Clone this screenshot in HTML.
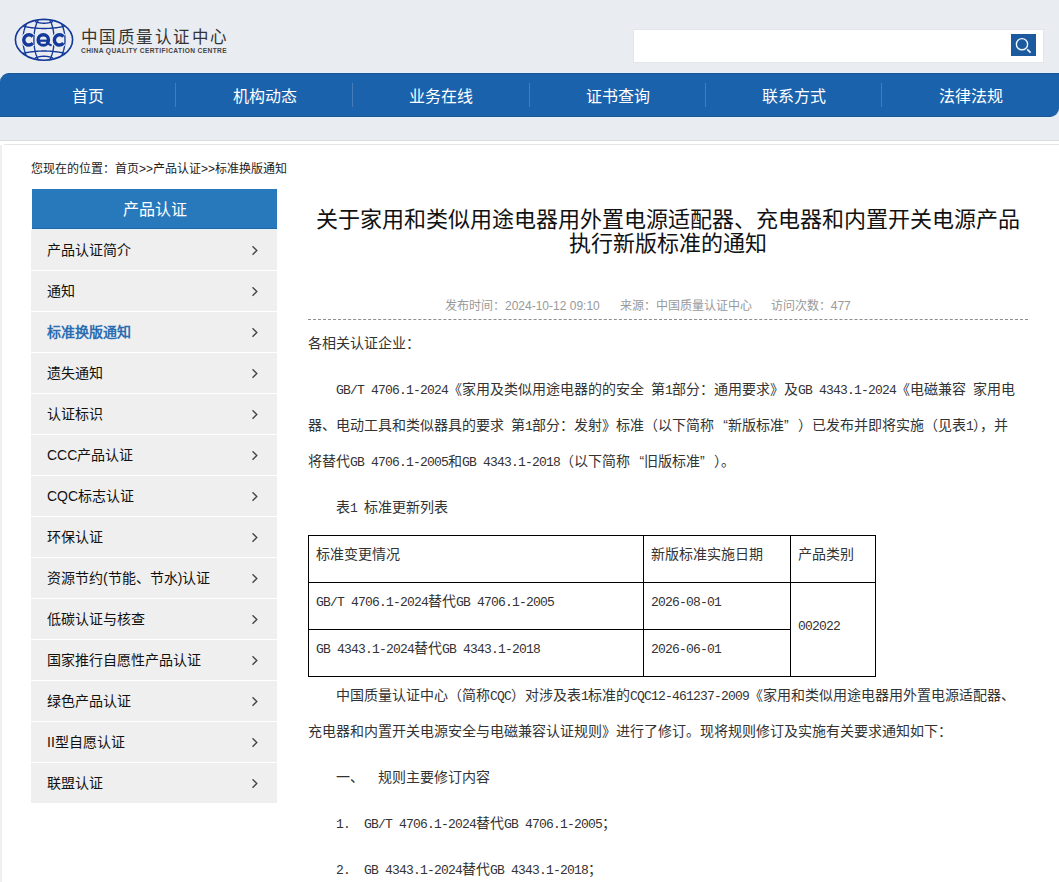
<!DOCTYPE html><html lang="zh-CN"><head><meta charset="utf-8"><title>CQC</title><style>
*{margin:0;padding:0;box-sizing:border-box}
html,body{width:1059px;height:882px;overflow:hidden;background:#fff}
body{position:relative;font-family:"Liberation Sans",sans-serif;color:#000}
.abs{position:absolute;white-space:nowrap}
#hdr{position:absolute;left:0;top:0;width:1059px;height:141px;background:#e9ecf0}
#nav{position:absolute;left:0;top:73px;width:1059px;height:44px;background:#1b62ad;border-top:1px solid #21538e;border-bottom:1px solid #21538e;border-radius:9px 0 9px 0;box-shadow:0 1px 0 #e0f4ff,0 -1px 0 #e0f4ff}
#nav .it{position:absolute;top:1.5px;height:42px;line-height:42px;width:176.5px;text-align:center;color:#fff;font-size:16px}
#nav .sep{position:absolute;top:9px;width:1px;height:24px;background:#477cbb}
#search{position:absolute;left:634px;top:30px;width:409px;height:32px;background:#fff;box-shadow:0 0 0 1px #e3e5e8}
#sbtn{position:absolute;left:1011px;top:34px;width:25px;height:22px;background:#1c5a9f}
#side{position:absolute;left:31px;top:189px;width:246px}
#side .hd{margin-left:1px;height:41px;padding-top:1px;background:#2779bc;border-bottom:1px solid #e2f6fd;box-shadow:inset 0 -1px 0 #2466a3;color:#fff;font-size:16px;text-align:center;line-height:39px}
#side .li{position:relative;height:41px;background:#efefef;border-bottom:1px solid #fff;font-size:14px;line-height:40px;padding-left:16px;padding-top:0;color:#111}
#side .li.on{color:#2b6db3;font-weight:bold}
#side .ar{position:absolute;left:221px;top:16px;width:7px;height:10px}
.txt{font-size:14px;color:#333}
.h{font-family:"Liberation Mono",monospace;font-size:13px;letter-spacing:-0.8px;white-space:pre}
.ql,.qr{display:inline-block;width:14px}
.ql{text-align:right}.qr{text-align:left}
</style></head><body>
<div id="hdr"></div>
<div class="abs" style="left:0;top:140px;width:1059px;height:1px;background:#d9dcdf"></div>
<div class="abs" style="left:4px;top:144px;width:1055px;height:1px;background:#e6e6e6"></div>
<div class="abs" style="left:0;top:145px;width:1.5px;height:737px;background:#efefef"></div>
<svg class="abs" style="left:10px;top:14px" width="70" height="52" viewBox="0 0 70 52">
<g fill="none" stroke="#14399a" stroke-width="1.35">
<ellipse cx="34" cy="25.8" rx="28.6" ry="20.4" stroke-width="1.6"/>
<path d="M16.39 41.59 L16.09 40.95 L15.81 40.30 L15.54 39.64 L15.29 38.97 L15.05 38.28 L14.82 37.60 L14.60 36.90 L14.39 36.19 L14.20 35.48 L14.03 34.76 L13.86 34.04 L13.72 33.31 L13.58 32.57 L13.46 31.83 L13.35 31.08 L13.26 30.34 L13.18 29.59 L13.12 28.83 L13.06 28.08 L13.03 27.32 L13.01 26.56 L13.00 25.80 L13.01 25.04 L13.03 24.28 L13.06 23.52 L13.12 22.77 L13.18 22.01 L13.26 21.26 L13.35 20.52 L13.46 19.77 L13.58 19.03 L13.72 18.29 L13.86 17.56 L14.03 16.84 L14.20 16.12 L14.39 15.41 L14.60 14.70 L14.82 14.00 L15.05 13.32 L15.29 12.63 L15.54 11.96 L15.81 11.30 L16.09 10.65 L16.39 10.01 M51.61 10.01 L51.91 10.65 L52.19 11.30 L52.46 11.96 L52.71 12.63 L52.95 13.32 L53.18 14.00 L53.40 14.70 L53.61 15.41 L53.80 16.12 L53.97 16.84 L54.14 17.56 L54.28 18.29 L54.42 19.03 L54.54 19.77 L54.65 20.52 L54.74 21.26 L54.82 22.01 L54.88 22.77 L54.94 23.52 L54.97 24.28 L54.99 25.04 L55.00 25.80 L54.99 26.56 L54.97 27.32 L54.94 28.08 L54.88 28.83 L54.82 29.59 L54.74 30.34 L54.65 31.08 L54.54 31.83 L54.42 32.57 L54.28 33.31 L54.14 34.04 L53.97 34.76 L53.80 35.48 L53.61 36.19 L53.40 36.90 L53.18 37.60 L52.95 38.28 L52.71 38.97 L52.46 39.64 L52.19 40.30 L51.91 40.95 L51.61 41.59 M28.28 45.58 L28.06 45.22 L27.85 44.84 L27.64 44.45 L27.44 44.05 L27.24 43.64 L27.05 43.21 L26.86 42.77 L26.67 42.32 L26.49 41.86 L26.32 41.39 L26.15 40.90 L25.99 40.41 L25.83 39.91 L25.68 39.39 L25.53 38.87 L25.39 38.34 L25.25 37.80 L25.12 37.25 L25.00 36.70 L24.88 36.13 L24.77 35.56 L24.67 34.98 L24.57 34.40 L24.48 33.81 L24.39 33.22 L24.32 32.62 L24.24 32.01 L24.18 31.40 L24.12 30.79 L24.07 30.17 L24.02 29.55 L23.99 28.93 L23.96 28.31 L23.93 27.68 L23.91 27.06 L23.90 26.43 L23.90 25.80 L23.90 25.17 L23.91 24.54 L23.93 23.92 L23.96 23.29 L23.99 22.67 L24.02 22.05 L24.07 21.43 L24.12 20.81 L24.18 20.20 L24.24 19.59 L24.32 18.98 L24.39 18.38 L24.48 17.79 L24.57 17.20 L24.67 16.62 L24.77 16.04 L24.88 15.47 L25.00 14.90 L25.12 14.35 L25.25 13.80 L25.39 13.26 L25.53 12.73 L25.68 12.21 L25.83 11.69 L25.99 11.19 L26.15 10.70 L26.32 10.21 L26.49 9.74 L26.67 9.28 L26.86 8.83 L27.05 8.39 L27.24 7.96 L27.44 7.55 L27.64 7.15 L27.85 6.76 L28.06 6.38 L28.28 6.02 M39.72 6.02 L39.94 6.38 L40.15 6.76 L40.36 7.15 L40.56 7.55 L40.76 7.96 L40.95 8.39 L41.14 8.83 L41.33 9.28 L41.51 9.74 L41.68 10.21 L41.85 10.70 L42.01 11.19 L42.17 11.69 L42.32 12.21 L42.47 12.73 L42.61 13.26 L42.75 13.80 L42.88 14.35 L43.00 14.90 L43.12 15.47 L43.23 16.04 L43.33 16.62 L43.43 17.20 L43.52 17.79 L43.61 18.38 L43.68 18.98 L43.76 19.59 L43.82 20.20 L43.88 20.81 L43.93 21.43 L43.98 22.05 L44.01 22.67 L44.04 23.29 L44.07 23.92 L44.09 24.54 L44.10 25.17 L44.10 25.80 L44.10 26.43 L44.09 27.06 L44.07 27.68 L44.04 28.31 L44.01 28.93 L43.98 29.55 L43.93 30.17 L43.88 30.79 L43.82 31.40 L43.76 32.01 L43.68 32.62 L43.61 33.22 L43.52 33.81 L43.43 34.40 L43.33 34.98 L43.23 35.56 L43.12 36.13 L43.00 36.70 L42.88 37.25 L42.75 37.80 L42.61 38.34 L42.47 38.87 L42.32 39.39 L42.17 39.91 L42.01 40.41 L41.85 40.90 L41.68 41.39 L41.51 41.86 L41.33 42.32 L41.14 42.77 L40.95 43.21 L40.76 43.64 L40.56 44.05 L40.36 44.45 L40.15 44.84 L39.94 45.22 L39.72 45.58 M13.20 12.26 L13.85 12.40 L14.50 12.53 L15.15 12.66 L15.80 12.78 L16.45 12.91 L17.10 13.02 L17.75 13.13 L18.40 13.24 L19.05 13.34 L19.70 13.44 L20.35 13.54 L21.00 13.62 L21.65 13.71 L22.30 13.79 L22.95 13.87 L23.60 13.94 L24.25 14.01 L24.90 14.07 L25.55 14.13 L26.20 14.19 L26.85 14.24 L27.50 14.28 L28.15 14.32 L28.80 14.36 L29.45 14.39 L30.10 14.42 L30.75 14.45 L31.40 14.46 L32.05 14.48 L32.70 14.49 L33.35 14.50 L34.00 14.50 L34.65 14.50 L35.30 14.49 L35.95 14.48 L36.60 14.46 L37.25 14.45 L37.90 14.42 L38.55 14.39 L39.20 14.36 L39.85 14.32 L40.50 14.28 L41.15 14.24 L41.80 14.19 L42.45 14.13 L43.10 14.07 L43.75 14.01 L44.40 13.94 L45.05 13.87 L45.70 13.79 L46.35 13.71 L47.00 13.62 L47.65 13.54 L48.30 13.44 L48.95 13.34 L49.60 13.24 L50.25 13.13 L50.90 13.02 L51.55 12.91 L52.20 12.79 L52.85 12.66 L53.50 12.53 L54.15 12.40 L54.80 12.26 M13.20 39.24 L13.85 39.10 L14.50 38.97 L15.15 38.84 L15.80 38.71 L16.45 38.59 L17.10 38.48 L17.75 38.37 L18.40 38.26 L19.05 38.16 L19.70 38.06 L20.35 37.96 L21.00 37.88 L21.65 37.79 L22.30 37.71 L22.95 37.63 L23.60 37.56 L24.25 37.49 L24.90 37.43 L25.55 37.37 L26.20 37.31 L26.85 37.26 L27.50 37.22 L28.15 37.18 L28.80 37.14 L29.45 37.11 L30.10 37.08 L30.75 37.05 L31.40 37.04 L32.05 37.02 L32.70 37.01 L33.35 37.00 L34.00 37.00 L34.65 37.00 L35.30 37.01 L35.95 37.02 L36.60 37.03 L37.25 37.05 L37.90 37.08 L38.55 37.11 L39.20 37.14 L39.85 37.18 L40.50 37.22 L41.15 37.26 L41.80 37.31 L42.45 37.37 L43.10 37.43 L43.75 37.49 L44.40 37.56 L45.05 37.63 L45.70 37.71 L46.35 37.79 L47.00 37.88 L47.65 37.96 L48.30 38.06 L48.95 38.16 L49.60 38.26 L50.25 38.37 L50.90 38.48 L51.55 38.59 L52.20 38.71 L52.85 38.84 L53.50 38.97 L54.15 39.10 L54.80 39.24 M25.00 7.50 L25.23 7.59 L25.45 7.67 L25.68 7.75 L25.90 7.83 L26.12 7.91 L26.35 7.99 L26.57 8.06 L26.80 8.13 L27.02 8.20 L27.25 8.27 L27.48 8.33 L27.70 8.39 L27.93 8.45 L28.15 8.51 L28.38 8.57 L28.60 8.62 L28.82 8.67 L29.05 8.72 L29.27 8.77 L29.50 8.81 L29.73 8.86 L29.95 8.90 L30.18 8.93 L30.40 8.97 L30.62 9.00 L30.85 9.04 L31.07 9.07 L31.30 9.09 L31.52 9.12 L31.75 9.14 L31.98 9.16 L32.20 9.18 L32.43 9.20 L32.65 9.21 L32.88 9.22 L33.10 9.23 L33.33 9.24 L33.55 9.25 L33.77 9.25 L34.00 9.25 L34.22 9.25 L34.45 9.25 L34.67 9.24 L34.90 9.23 L35.12 9.22 L35.35 9.21 L35.58 9.20 L35.80 9.18 L36.03 9.16 L36.25 9.14 L36.47 9.12 L36.70 9.09 L36.92 9.07 L37.15 9.04 L37.38 9.00 L37.60 8.97 L37.83 8.93 L38.05 8.90 L38.27 8.86 L38.50 8.81 L38.72 8.77 L38.95 8.72 L39.17 8.67 L39.40 8.62 L39.62 8.57 L39.85 8.51 L40.08 8.45 L40.30 8.39 L40.53 8.33 L40.75 8.27 L40.97 8.20 L41.20 8.13 L41.42 8.06 L41.65 7.99 L41.88 7.91 L42.10 7.83 L42.33 7.75 L42.55 7.67 L42.77 7.59 L43.00 7.50 M25.00 44.00 L25.23 43.91 L25.45 43.83 L25.68 43.75 L25.90 43.67 L26.12 43.59 L26.35 43.51 L26.57 43.44 L26.80 43.37 L27.02 43.30 L27.25 43.23 L27.48 43.17 L27.70 43.11 L27.93 43.05 L28.15 42.99 L28.38 42.93 L28.60 42.88 L28.82 42.83 L29.05 42.78 L29.27 42.73 L29.50 42.69 L29.73 42.64 L29.95 42.60 L30.18 42.57 L30.40 42.53 L30.62 42.50 L30.85 42.46 L31.07 42.43 L31.30 42.41 L31.52 42.38 L31.75 42.36 L31.98 42.34 L32.20 42.32 L32.43 42.30 L32.65 42.29 L32.88 42.28 L33.10 42.27 L33.33 42.26 L33.55 42.25 L33.77 42.25 L34.00 42.25 L34.22 42.25 L34.45 42.25 L34.67 42.26 L34.90 42.27 L35.12 42.28 L35.35 42.29 L35.58 42.30 L35.80 42.32 L36.03 42.34 L36.25 42.36 L36.47 42.38 L36.70 42.41 L36.92 42.43 L37.15 42.46 L37.38 42.50 L37.60 42.53 L37.83 42.57 L38.05 42.60 L38.27 42.64 L38.50 42.69 L38.72 42.73 L38.95 42.78 L39.17 42.83 L39.40 42.88 L39.62 42.93 L39.85 42.99 L40.08 43.05 L40.30 43.11 L40.53 43.17 L40.75 43.23 L40.97 43.30 L41.20 43.37 L41.42 43.44 L41.65 43.51 L41.88 43.59 L42.10 43.67 L42.33 43.75 L42.55 43.83 L42.77 43.91 L43.00 44.00"/>
</g>
<g fill="none" stroke="#e9ecf0" stroke-width="5.6">
<path d="M22.85 22.59 A5.15 5.15 0 1 0 22.85 29.21"/><circle cx="33.3" cy="25.9" r="5.15"/><path d="M53.45 22.59 A5.15 5.15 0 1 0 53.45 29.21"/><path d="M37.5 29.6 L41.8 31.8"/>
</g>
<g fill="none" stroke="#14399a" stroke-width="3.4">
<path d="M22.85 22.59 A5.15 5.15 0 1 0 22.85 29.21"/><circle cx="33.3" cy="25.9" r="5.15"/><path d="M53.45 22.59 A5.15 5.15 0 1 0 53.45 29.21"/>
</g>
<path d="M37.6 29.4 L41.6 31.6" stroke="#14399a" stroke-width="2.2"/>
<rect x="29.6" y="25.6" width="7.4" height="2.2" fill="#14399a"/>
<rect x="30.8" y="28.2" width="5" height="1.4" fill="#e9ecf0"/>
</svg>
<div class="abs" style="left:80.5px;top:26.5px;font-size:16.5px;line-height:20px;letter-spacing:1.55px;font-weight:500;color:#333">中国质量认证中心</div>
<div class="abs" style="left:81px;top:45.5px;font-size:6.6px;line-height:9px;font-weight:bold;letter-spacing:0.4px;color:#444">CHINA QUALITY CERTIFICATION CENTRE</div>
<div id="search"></div><div id="sbtn"><svg width="25" height="22" viewBox="0 0 25 22" style="position:absolute;left:0;top:0"><circle cx="11" cy="10.2" r="5.6" fill="none" stroke="#f2f8ff" stroke-width="1.4"/><path d="M16.2 15.4 L19.6 18.6" stroke="#f2f8ff" stroke-width="1.6"/></svg></div>
<div id="nav"><div class="it" style="left:0.0px">首页</div><div class="it" style="left:176.5px">机构动态</div><div class="sep" style="left:175px"></div><div class="it" style="left:353.0px">业务在线</div><div class="sep" style="left:352px"></div><div class="it" style="left:529.5px">证书查询</div><div class="sep" style="left:529px"></div><div class="it" style="left:706.0px">联系方式</div><div class="sep" style="left:705px"></div><div class="it" style="left:882.5px">法律法规</div><div class="sep" style="left:881px"></div></div>
<div class="abs" style="left:31px;top:159.5px;font-size:12px;line-height:18px;color:#222">您现在的位置：首页&gt;&gt;产品认证&gt;&gt;标准换版通知</div>
<div id="side"><div class="hd">产品认证</div><div class="li">产品认证简介<svg class="ar" viewBox="0 0 7 10"><path d="M0.5 0.3 L4.8 4.5 L0.5 8.7" fill="none" stroke="#444" stroke-width="1.35"/></svg></div><div class="li">通知<svg class="ar" viewBox="0 0 7 10"><path d="M0.5 0.3 L4.8 4.5 L0.5 8.7" fill="none" stroke="#444" stroke-width="1.35"/></svg></div><div class="li on">标准换版通知<svg class="ar" viewBox="0 0 7 10"><path d="M0.5 0.3 L4.8 4.5 L0.5 8.7" fill="none" stroke="#444" stroke-width="1.35"/></svg></div><div class="li">遗失通知<svg class="ar" viewBox="0 0 7 10"><path d="M0.5 0.3 L4.8 4.5 L0.5 8.7" fill="none" stroke="#444" stroke-width="1.35"/></svg></div><div class="li">认证标识<svg class="ar" viewBox="0 0 7 10"><path d="M0.5 0.3 L4.8 4.5 L0.5 8.7" fill="none" stroke="#444" stroke-width="1.35"/></svg></div><div class="li">CCC产品认证<svg class="ar" viewBox="0 0 7 10"><path d="M0.5 0.3 L4.8 4.5 L0.5 8.7" fill="none" stroke="#444" stroke-width="1.35"/></svg></div><div class="li">CQC标志认证<svg class="ar" viewBox="0 0 7 10"><path d="M0.5 0.3 L4.8 4.5 L0.5 8.7" fill="none" stroke="#444" stroke-width="1.35"/></svg></div><div class="li">环保认证<svg class="ar" viewBox="0 0 7 10"><path d="M0.5 0.3 L4.8 4.5 L0.5 8.7" fill="none" stroke="#444" stroke-width="1.35"/></svg></div><div class="li">资源节约(节能、节水)认证<svg class="ar" viewBox="0 0 7 10"><path d="M0.5 0.3 L4.8 4.5 L0.5 8.7" fill="none" stroke="#444" stroke-width="1.35"/></svg></div><div class="li">低碳认证与核查<svg class="ar" viewBox="0 0 7 10"><path d="M0.5 0.3 L4.8 4.5 L0.5 8.7" fill="none" stroke="#444" stroke-width="1.35"/></svg></div><div class="li">国家推行自愿性产品认证<svg class="ar" viewBox="0 0 7 10"><path d="M0.5 0.3 L4.8 4.5 L0.5 8.7" fill="none" stroke="#444" stroke-width="1.35"/></svg></div><div class="li">绿色产品认证<svg class="ar" viewBox="0 0 7 10"><path d="M0.5 0.3 L4.8 4.5 L0.5 8.7" fill="none" stroke="#444" stroke-width="1.35"/></svg></div><div class="li">II型自愿认证<svg class="ar" viewBox="0 0 7 10"><path d="M0.5 0.3 L4.8 4.5 L0.5 8.7" fill="none" stroke="#444" stroke-width="1.35"/></svg></div><div class="li">联盟认证<svg class="ar" viewBox="0 0 7 10"><path d="M0.5 0.3 L4.8 4.5 L0.5 8.7" fill="none" stroke="#444" stroke-width="1.35"/></svg></div></div>
<div class="abs" style="left:307px;top:207.5px;width:721px;text-align:center;font-size:22px;line-height:24px;color:#111">关于家用和类似用途电器用外置电源适配器、充电器和内置开关电源产品<br>执行新版标准的通知</div>
<div class="abs" style="left:445px;top:297px;font-size:12px;line-height:18px;color:#999">发布时间：2024-10-12 09:10<span style="display:inline-block;width:20px"></span>来源：中国质量认证中心<span style="display:inline-block;width:19px"></span>访问次数：477</div>
<div class="abs" style="left:308px;top:319px;width:720px;height:1px;border-top:1px dashed #8e8e8e"></div>
<div class="abs txt" style="left:308px;top:333px;line-height:20px;">各相关认证企业：</div>

<div class="abs txt" style="left:336px;top:379px;line-height:20px;"><span class="h">GB/T 4706.1-2024</span>《家用及类似用途电器的的安全<span class="h"> </span>第<span class="h">1</span>部分：通用要求》及<span class="h">GB 4343.1-2024</span>《电磁兼容<span class="h"> </span>家用电</div>

<div class="abs txt" style="left:308px;top:415px;line-height:20px;">器、电动工具和类似器具的要求<span class="h"> </span>第<span class="h">1</span>部分：发射》标准（以下简称<span class="ql">“</span>新版标准<span class="qr">”</span>）已发布并即将实施（见表<span class="h">1</span>），并</div>

<div class="abs txt" style="left:308px;top:451px;line-height:20px;">将替代<span class="h">GB 4706.1-2005</span>和<span class="h">GB 4343.1-2018</span>（以下简称<span class="ql">“</span>旧版标准<span class="qr">”</span>）。</div>

<div class="abs txt" style="left:336px;top:497px;line-height:20px;">表<span class="h">1 </span>标准更新列表</div>

<div class="abs" style="left:308px;top:535px;width:568px;height:142px;border:1px solid #000"></div>
<div class="abs" style="left:308px;top:582px;width:483px;height:1px;background:#000"></div>
<div class="abs" style="left:308px;top:629px;width:483px;height:1px;background:#000"></div>
<div class="abs" style="left:643px;top:535px;width:1px;height:142px;background:#000"></div>
<div class="abs" style="left:790px;top:535px;width:1px;height:142px;background:#000"></div>
<div class="abs" style="left:790px;top:582px;width:86px;height:1px;background:#000"></div>

<div class="abs txt" style="left:316px;top:544px;line-height:20px;">标准变更情况</div>

<div class="abs txt" style="left:651px;top:544px;line-height:20px;">新版标准实施日期</div>

<div class="abs txt" style="left:798px;top:544px;line-height:20px;">产品类别</div>

<div class="abs txt" style="left:316px;top:591px;line-height:20px;"><span class="h">GB/T 4706.1-2024</span>替代<span class="h">GB 4706.1-2005</span></div>

<div class="abs txt" style="left:651px;top:591px;line-height:20px;"><span class="h">2026-08-01</span></div>

<div class="abs txt" style="left:316px;top:638px;line-height:20px;"><span class="h">GB 4343.1-2024</span>替代<span class="h">GB 4343.1-2018</span></div>

<div class="abs txt" style="left:651px;top:638px;line-height:20px;"><span class="h">2026-06-01</span></div>

<div class="abs txt" style="left:798px;top:615px;line-height:20px;"><span class="h">002022</span></div>

<div class="abs txt" style="left:336px;top:685px;line-height:20px;">中国质量认证中心（简称<span class="h">CQC</span>）对涉及表<span class="h">1</span>标准的<span class="h">CQC12-461237-2009</span>《家用和类似用途电器用外置电源适配器、</div>

<div class="abs txt" style="left:308px;top:721px;line-height:20px;">充电器和内置开关电源安全与电磁兼容认证规则》进行了修订。现将规则修订及实施有关要求通知如下：</div>

<div class="abs txt" style="left:336px;top:767px;line-height:20px;">一、<span class="h">  </span>规则主要修订内容</div>

<div class="abs txt" style="left:336px;top:813px;line-height:20px;"><span class="h">1.  GB/T 4706.1-2024</span>替代<span class="h">GB 4706.1-2005</span>；</div>

<div class="abs txt" style="left:336px;top:859px;line-height:20px;"><span class="h">2.  GB 4343.1-2024</span>替代<span class="h">GB 4343.1-2018</span>；</div>

</body></html>
